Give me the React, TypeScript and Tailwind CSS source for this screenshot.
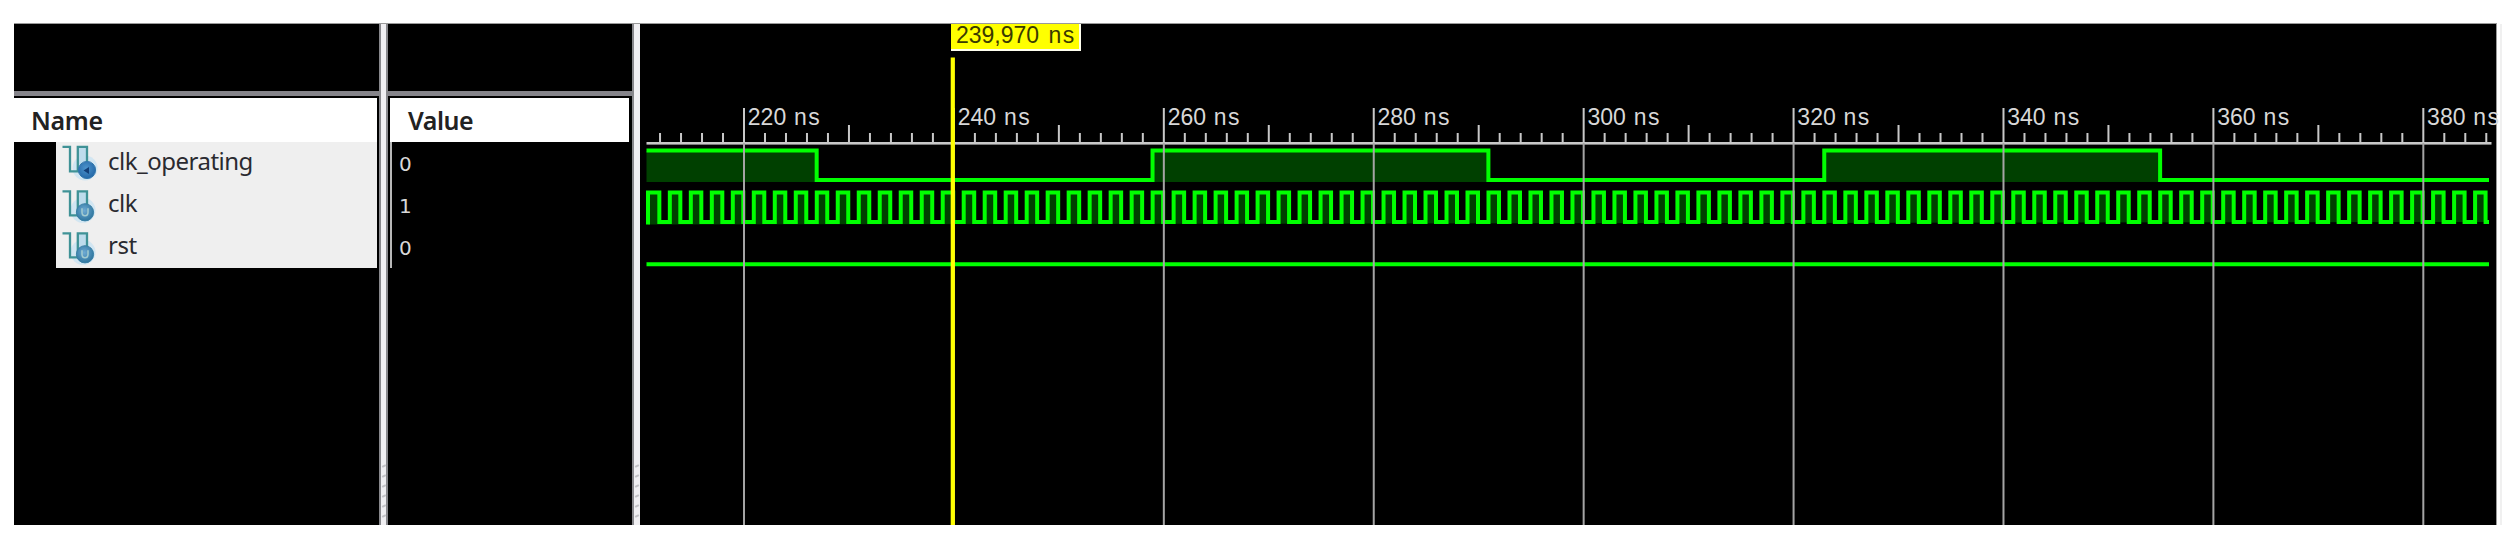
type Signal = { name: string; value: string; kind: "reg" | "wire" };

const signals: Signal[] = [
  { name: "clk_operating", value: "0", kind: "reg" },
  { name: "clk", value: "1", kind: "wire" },
  { name: "rst", value: "0", kind: "wire" },
];

// Waveform geometry, relative to the left and top edge of the wave pane
const LEFT = 6.5;
const RIGHT = 1849;
const X220 = 104;
const NS = 10.4957;
const xAt = (ns: number) => X220 + (ns - 220) * NS;

function SignalIcon({ kind }: { kind: Signal["kind"] }) {
  const reg = kind === "reg";
  const cx = reg ? 31 : 29;
  const cy = reg ? 28 : 28.3;
  const top = reg ? 4.8 : 7.3;
  const low = reg ? 29.3 : 31.3;
  return (
    <svg width="50" height="42" viewBox="0 0 50 42" className="shrink-0" fill="none">
      <defs>
        <radialGradient id={"ball-" + kind} cx="0.45" cy="0.4" r="0.6">
          <stop offset="0" stopColor={reg ? "#4d94cc" : "#6fabd4"} />
          <stop offset="1" stopColor={reg ? "#2468a8" : "#2f769f"} />
        </radialGradient>
      </defs>
      <circle cx={cx - 2} cy={cy - 2} r="12.5" fill="#b5def5" opacity="0.5" />
      <path d={`M21.5 ${top}h9v22h-9z`} fill="#bddcec" />
      <path
        d={`M6.5 ${top}H14V${low}H21.8V${top}H31V${cy - 6}`}
        stroke="#3f9296"
        strokeWidth="2.3"
      />
      <circle cx={cx} cy={cy} r="8.6" fill={`url(#ball-${kind})`} stroke={reg ? "#3478ad" : "#3a80a6"} strokeWidth="1" />
      {reg ? (
        <path d={`M${cx - 3.5} ${cy + 0.5}l5.5-3.5v7z`} fill="#123f78" />
      ) : (
        <path
          d={`M${cx - 3} ${cy - 4}v4q0 3.5 3 3.5t3-3.5v-4`}
          stroke="#a3cbd0"
          strokeWidth="1.5"
        />
      )}
    </svg>
  );
}

function Splitter({ both }: { both: boolean }) {
  return (
    <div
      className={
        "flex shrink-0 flex-col items-center justify-end border-l-2 border-[#88888c] bg-[#f0eff2] pb-[8px] gap-[8px] " +
        (both ? "w-[9px] border-r-2" : "w-[8px]")
      }
    >
      {[0, 1, 2, 3, 4, 5].map((i) => (
        <span key={i} className="h-[2px] w-[4px] -rotate-[25deg] bg-[#c2c2c6]" />
      ))}
    </div>
  );
}

function clockPath() {
  let d = `M${LEFT + 1.5} 200.5V168.5`;
  for (let ns = 212; ns <= 386; ns += 2) {
    const fall = xAt(ns) - 0.7;
    if (fall > RIGHT) break;
    d += `H${fall}V198`;
    const rise = fall + NS;
    d += rise < RIGHT ? `H${rise}V168.5` : `H${RIGHT}`;
  }
  return d;
}

function Waves() {
  const ticks: number[] = [];
  for (let ns = 212; ns <= 386; ns += 2) ticks.push(ns);
  const e = [227, 259, 291, 323, 355].map((n) => xAt(n) - 0.8);
  const clk = clockPath();
  return (
    <svg width="1856" height="501" viewBox="0 0 1856 501" className="block shrink-0 overflow-visible">
      <g fill="#004000">
        <rect x={LEFT} y="127" width={e[0] - LEFT} height="31" />
        <rect x={e[1]} y="127" width={e[2] - e[1]} height="31" />
        <rect x={e[3]} y="127" width={e[4] - e[3]} height="31" />
        <path d={clk + "V198Z"} />
      </g>
      <g fill="none" stroke="#00ff00" strokeWidth="4">
        <path
          d={`M${LEFT} 126.5H${e[0]}V156H${e[1]}V126.5H${e[2]}V156H${e[3]}V126.5H${e[4]}V156H${RIGHT}`}
        />
        <path d={clk} />
        <path d={`M${LEFT} 240.3H${RIGHT}`} />
      </g>
      <g fill="#c8c8c8">
        <rect x={LEFT} y="118" width="1845" height="2.6" />
        {ticks.map((ns) => {
          const x = xAt(ns) - 1;
          if (ns % 20 === 0)
            return (
              <g key={ns}>
                <rect x={x} y="84" width="2" height="35" />
                <rect x={x} y="119" width="2" height="382" fill="#a4a4a4" />
              </g>
            );
          return ns % 10 === 0 ? (
            <rect key={ns} x={x} y="101" width="2" height="18" />
          ) : (
            <rect key={ns} x={x} y="109" width="2" height="10" />
          );
        })}
      </g>
      <g fill="#d8d8d8" className="font-['Liberation_Sans'] text-[23px]">
        {ticks
          .filter((ns) => ns % 20 === 0)
          .map((ns) => (
            <text key={ns} y="101">
              <tspan x={xAt(ns) + 3.8}>{ns}</tspan>
              <tspan x={xAt(ns) + 50} letterSpacing="1.5">ns</tspan>
            </text>
          ))}
      </g>
      <rect x="310.7" y="33.5" width="4.2" height="467.5" fill="#ffff00" />
    </svg>
  );
}

export default function App() {
  return (
    <div className="h-[537px] w-[2511px] overflow-hidden bg-white pt-[23px] pl-[14px] font-['Noto_Sans',sans-serif]">
      <div className="h-px w-[2483px] bg-[#9a9a9a]" />
      <div className="flex h-[501px] w-[2488px]">
        <section className="flex w-[365px] shrink-0 flex-col bg-black">
          <div className="h-[67px]" />
          <div className="h-[5px] bg-[#85848a]" />
          <div className="mt-[2px] mr-[2px] flex h-[44px] items-center bg-white pl-[17px] text-[25px] leading-[44px] font-semibold text-[#222]">
            <span className="-mt-[1px] tracking-[-0.3px]">Name</span>
          </div>
          <div className="mr-[2px] ml-[42px] h-[126px] bg-[#efefef]">
            {signals.map((s) => (
              <div key={s.name} className="flex h-[42px] pb-[2px] text-[24px] leading-[38px] text-[#2a2a30]">
                <SignalIcon kind={s.kind} />
                <span className="pl-[2px] tracking-[-0.5px]">{s.name}</span>
              </div>
            ))}
          </div>
        </section>
        <Splitter both />
        <section className="flex w-[244px] shrink-0 flex-col bg-black">
          <div className="h-[67px]" />
          <div className="h-[5px] bg-[#85848a]" />
          <div className="mt-[2px] mr-[3px] ml-[2px] flex h-[44px] items-center bg-white pl-[18px] text-[25px] leading-[44px] font-semibold text-[#222]">
            <span className="-mt-[1px] tracking-[-0.5px]">Value</span>
          </div>
          <div className="ml-[2px] h-[126px] border-l-2 border-[#b8b8b8] font-['DejaVu_Sans'] text-[20px] text-[#d8d8d8]">
            {signals.map((s) => (
              <div key={s.name} className="h-[42px] pl-[7px] leading-[44px]">
                {s.value}
              </div>
            ))}
          </div>
        </section>
        <Splitter both={false} />
        <section className="relative w-[1856px] shrink-0 bg-black">
          <Waves />
          <div className="absolute top-0 left-[311px] h-[27px] w-[130px] border-r-2 border-b-2 border-[#fffff0] bg-[#ffff00] pl-[5px] font-['Liberation_Sans'] text-[23px] leading-[22px] whitespace-nowrap text-[#3a3a00] [word-spacing:3px]">
            239,970 <span className="tracking-[1.5px]">ns</span>
          </div>
        </section>
        <div className="w-[2px] border-l border-[#999]" />
        <div className="ml-[2px] w-[2px] bg-[#f0f0f0]" />
      </div>
    </div>
  );
}
